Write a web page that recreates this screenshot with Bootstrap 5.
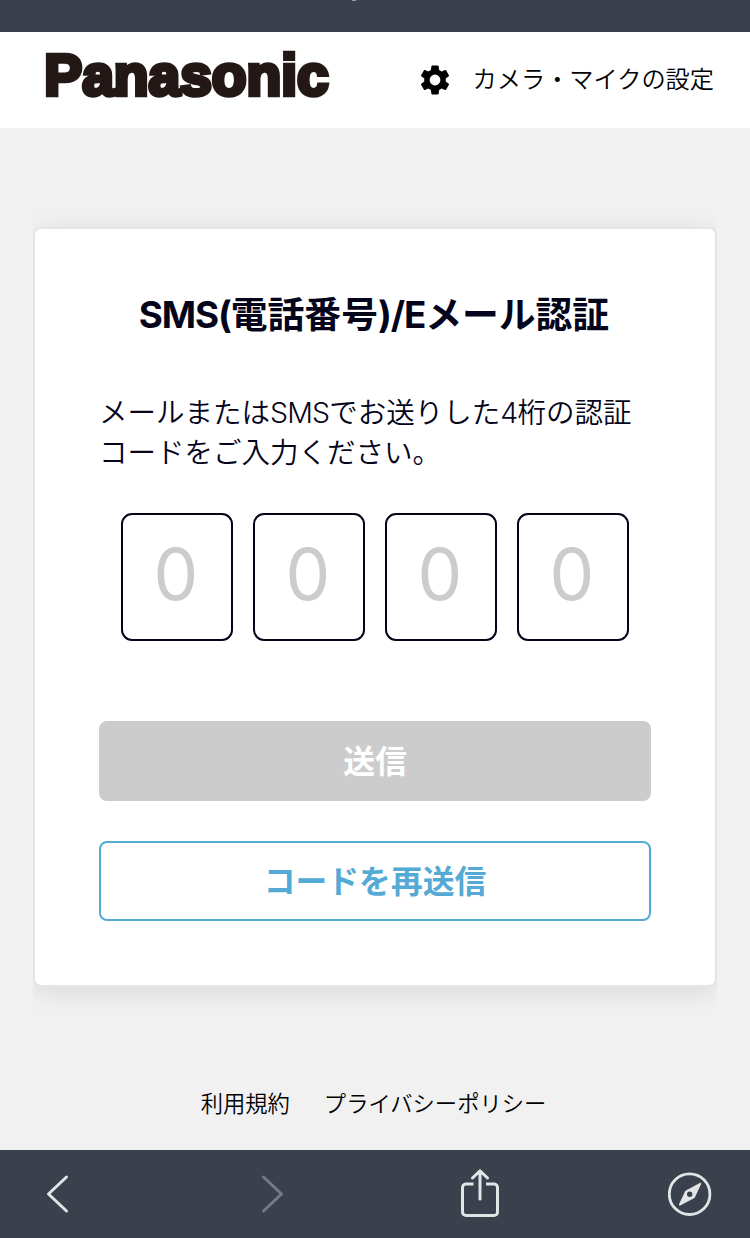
<!DOCTYPE html>
<html lang="ja">
<head>
<meta charset="utf-8">
<meta name="viewport" content="width=device-width, initial-scale=1">
<title>SMS(電話番号)/Eメール認証</title>
<link href="https://cdn.jsdelivr.net/npm/bootstrap@5.3.0/dist/css/bootstrap.min.css" rel="stylesheet">
<style>
  body { font-family: Inter, "Noto Sans CJK JP", sans-serif; font-weight: 350; background: #f1f1f1; color: #000; min-height: 1238px; }
  .chrome-bar { background: #3a404c; }
  .chrome-top { height: 32px; }
  .chrome-top svg { display: block; margin: 0 0 0 348px; }
  .site-header { height: 96px; padding: 0 36px 0 46px; }
  .brand-logo { width: 286px; height: 56px; overflow: visible; }
  .brand-logo text { font: 700 57.5px "Liberation Sans", sans-serif; fill: #231815; stroke: #231815; stroke-width: 4.4; stroke-linejoin: miter; }
  .settings-link { font-size: 24.2px; line-height: 36px; color: #000; gap: 20px; }
  .card-area { padding: 99px 33px 0; }
  .card-clip { clip-path: inset(-60px 0 -60px 0); }
  .auth-card { height: 760px; border: 2px solid #e4e4ea; border-radius: 8px; padding: 62px 64px 64px; box-shadow: 0 5px 26px rgba(0,0,0,.1); }
  .auth-title { font-size: 36.8px; line-height: 48px; font-weight: 700; color: #04041a; margin: 0 2px 54px 0; white-space: nowrap; }
  .auth-title .latin { letter-spacing: -1.1px; }
  .auth-text { font-size: 28.5px; line-height: 40px; color: #04041a; margin: 0 0 40px; white-space: nowrap; }
  .auth-text .latin { letter-spacing: -.8px; font-weight: 300; }
  .code-row { gap: 20px; margin-bottom: 80px; }
  .code-box { width: 112px; height: 128px; border: 2px solid #04041a; border-radius: 11px; font-size: 71px; font-weight: 400; padding: 0 2px 7px 0; text-align: center; }
  .code-box::placeholder { color: #ccc; opacity: 1; }
  .auth-btn { height: 80px; border-radius: 8px; border-width: 2px; font-size: 31.8px; font-weight: 700; line-height: 1; padding: 2px 0 0; }
  .btn-send, .btn-send:disabled { background: #ccc; border-color: #ccc; color: #fff; opacity: 1; }
  .btn-again { background: #fff; border-color: #55aad5; color: #55aad5; margin-top: 40px; }
  .site-footer { padding: 99px 3px 0 0; gap: 34px; font-size: 22.3px; line-height: 36px; }
  .site-footer a { color: #000; }
  .chrome-bottom { height: 88px; padding-left: 45px; }
  .nav-forward { margin-left: 191px; }
  .nav-share { margin-left: 176px; }
  .nav-compass { margin-left: 168px; }
</style>
</head>
<body class="d-flex flex-column">
  <div class="chrome-bar chrome-top"><svg width="12" height="3" viewBox="0 0 12 3"><path d="M3.500 0h5l-.8.900h-3.400z" fill="#9a9da4"/></svg></div>

  <header class="site-header bg-white d-flex align-items-center justify-content-between">
    <svg class="brand-logo" viewBox="0 0 286 56" role="img" aria-label="Panasonic"><text x="-1.800" y="43.400" textLength="284.500" lengthAdjust="spacingAndGlyphs">Panasonic</text></svg>
    <a class="settings-link d-flex align-items-center text-decoration-none" href="#">
      <svg width="36" height="36" viewBox="0 0 24 24"><path d="M19.140 12.940c.04-.3.06-.61.06-.94 0-.32-.02-.64-.07-.94l2.030-1.580c.18-.14.23-.41.12-.61l-1.920-3.320c-.12-.22-.37-.29-.59-.22l-2.390.96c-.5-.38-1.030-.7-1.620-.94l-.36-2.540c-.04-.24-.24-.41-.48-.41h-3.840c-.24 0-.43.17-.47.41l-.36 2.540c-.59.24-1.130.57-1.620.94l-2.390-.96c-.22-.08-.47 0-.59.22L2.740 8.870c-.12.21-.08.47.12.61l2.030 1.580c-.05.3-.09.63-.09.94s.02.64.07.94l-2.030 1.580c-.18.14-.23.41-.12.61l1.920 3.320c.12.22.37.29.59.22l2.390-.96c.5.38 1.030.7 1.620.94l.36 2.540c.05.24.24.41.48.41h3.840c.24 0 .44-.17.47-.41l.36-2.540c.59-.24 1.130-.56 1.620-.94l2.390.96c.22.08.47 0 .59-.22l1.920-3.320c.12-.22.07-.47-.12-.61zM12 15.600a3.600 3.600 0 1 1 0-7.200 3.600 3.600 0 0 1 0 7.200z"/></svg>
      <span>カメラ・マイクの設定</span>
    </a>
  </header>

  <main class="card-area">
    <div class="card-clip">
      <section class="card auth-card">
        <h1 class="auth-title text-center"><span class="latin">SMS(</span>電話番号<span class="latin">)/E</span>メール認証</h1>
        <p class="auth-text">メールまたは<span class="latin">SMS</span>でお送りした<span class="latin">4</span>桁の認証<br>コードをご入力ください。</p>
        <div class="code-row d-flex justify-content-center">
          <input class="code-box" placeholder="0" maxlength="1" inputmode="numeric">
          <input class="code-box" placeholder="0" maxlength="1" inputmode="numeric">
          <input class="code-box" placeholder="0" maxlength="1" inputmode="numeric">
          <input class="code-box" placeholder="0" maxlength="1" inputmode="numeric">
        </div>
        <button class="btn auth-btn btn-send w-100" disabled>送信</button>
        <button class="btn auth-btn btn-again w-100">コードを再送信</button>
      </section>
    </div>
  </main>

  <footer class="site-footer d-flex justify-content-center">
    <a class="text-decoration-none" href="#">利用規約</a>
    <a class="text-decoration-none" href="#">プライバシーポリシー</a>
  </footer>

  <nav class="chrome-bar chrome-bottom d-flex align-items-center mt-auto">
    <svg width="24" height="40" viewBox="0 0 24 40" fill="none" stroke="#e3e4e6" stroke-width="3" stroke-linecap="round" stroke-linejoin="round"><path d="M21.500 3 3.500 20l18 17"/></svg>
    <svg class="nav-forward" width="24" height="40" viewBox="0 0 24 40" fill="none" stroke="#757a83" stroke-width="3" stroke-linecap="round" stroke-linejoin="round"><path d="m3.500 3 18 17-18 17"/></svg>
    <svg class="nav-share" width="40" height="50" viewBox="0 0 40 50" fill="none" stroke="#e3e4e6" stroke-width="3" stroke-linecap="round" stroke-linejoin="round"><path stroke-linecap="butt" d="M13.500 15H6a3.500 3.500 0 0 0-3.500 3.500v24.500a3.500 3.500 0 0 0 3.500 3.500h28a3.500 3.500 0 0 0 3.500-3.500V18.500a3.500 3.500 0 0 0-3.500-3.500H26"/><path d="M20 30V1.800M12.500 9 20 1.800 27.500 9"/></svg>
    <svg class="nav-compass" width="44" height="44" viewBox="0 0 44 44"><circle cx="21.600" cy="22.200" r="20.300" fill="none" stroke="#e3e4e6" stroke-width="2.800"/><path fill="#e3e4e6" fill-rule="evenodd" d="M33 12.300 27.200 24.800Q26.800 25.800 26 26.300L12.200 33.400Q10.300 34 11 32.200L17 19.600Q17.400 18.700 18.400 18.200L31.800 11Q33.700 10.300 33 12.300zM21.700 19.500a2.700 2.700 0 1 0 0 5.400 2.700 2.700 0 0 0 0-5.400z"/></svg>
  </nav>
<script src="https://cdn.jsdelivr.net/npm/bootstrap@5.3.0/dist/js/bootstrap.bundle.min.js"></script>
</body>
</html>
